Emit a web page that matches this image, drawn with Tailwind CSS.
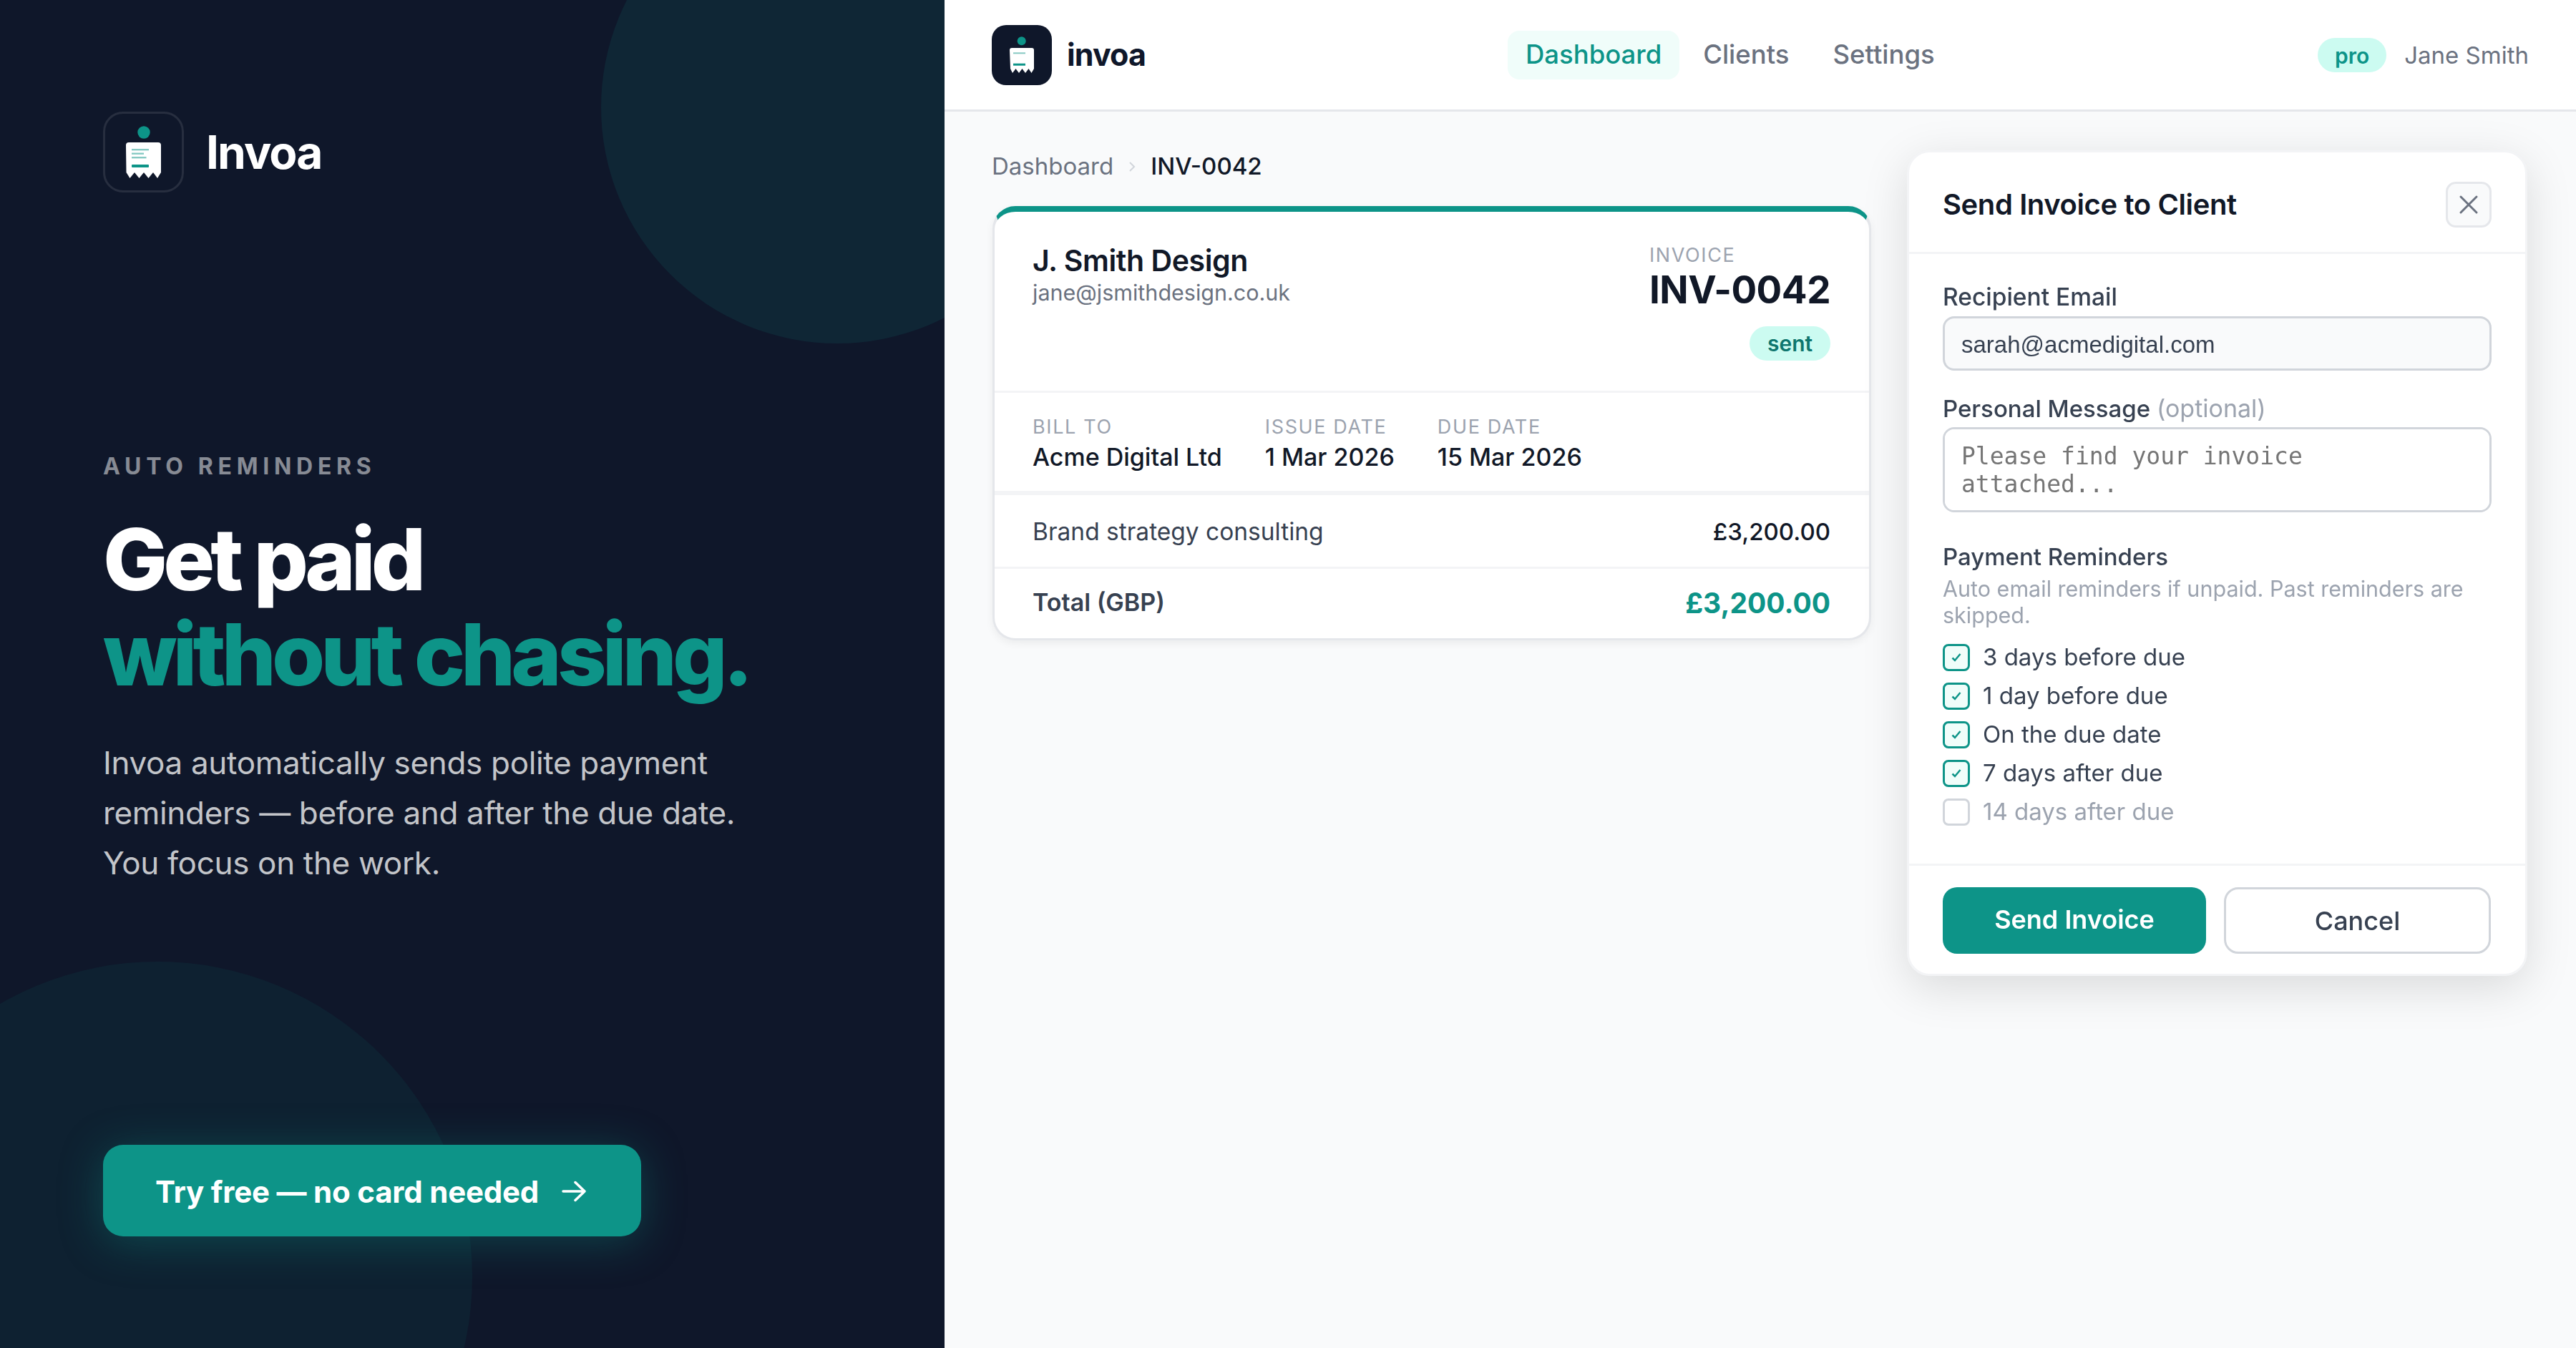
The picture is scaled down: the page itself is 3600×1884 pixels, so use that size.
<!DOCTYPE html>
<html lang="en">
<head>
  <meta charset="UTF-8">
  <title>Invoa</title>
  <script src="https://cdn.jsdelivr.net/npm/@tailwindcss/browser@4"></script>
</head>
<body class="font-['Inter',sans-serif] text-[#111827] bg-[#f9fafb]">
<div class="flex w-[3600px] h-[1884px] overflow-hidden">

  <!-- left panel -->
  <aside class="relative w-[1320px] shrink-0 h-full bg-[#0f172a] overflow-hidden flex flex-col pt-[156px] pb-[156px] pl-[144px]">
    <div class="absolute w-[660px] h-[660px] rounded-full bg-[#0d9488]/12 top-[-180px] right-[-180px]"></div>
    <div class="absolute w-[880px] h-[880px] rounded-full bg-[#0d9488]/8 left-[-220px] bottom-[-340px]"></div>

    <div class="relative flex items-center gap-[31px]">
      <div class="w-[113px] h-[113px] rounded-[28px] border-[3px] border-white/10 box-border relative">
        <svg class="absolute left-[-3px] top-[-3px]" width="113" height="113" viewBox="0 0 113 113">
          <circle cx="57" cy="29" r="8.7" fill="#0d9488"/>
          <path d="M32 47a4 4 0 0 1 4-4h41a4 4 0 0 1 4 4v38l-5 8-6-8-6.500 8-6.500-8-6.500 8-6.500-8-6.500 8-5-8z" fill="#fff"/>
          <rect x="40" y="52" width="24" height="2.400" fill="#0d9488" opacity=".5"/>
          <rect x="40" y="57.500" width="17" height="2.400" fill="#0d9488" opacity=".5"/>
          <rect x="40" y="63" width="20.500" height="2.400" fill="#0d9488" opacity=".5"/>
          <rect x="40" y="74" width="24" height="4" rx="1" fill="#0d9488"/>
        </svg>
      </div>
      <span class="text-[64px] leading-none font-bold tracking-[-0.03em] text-white">Invoa</span>
    </div>

    <div class="relative mt-[366px] text-[32px] leading-[34px] font-bold tracking-[0.21em] text-white/50">AUTO REMINDERS</div>
    <h1 class="relative mt-[46px] text-[120px] leading-[133px] font-extrabold tracking-[-0.05em] text-white">Get paid<br><span class="text-[#0d9488]">without chasing.</span></h1>
    <p class="relative mt-[50px] text-[44px] leading-[70px] tracking-[-0.0075em] text-white/75 w-[960px]">Invoa automatically sends polite payment<br>reminders — before and after the due date.<br>You focus on the work.</p>

    <a class="relative mt-auto self-start w-[752px] h-[128px] pt-[2px] rounded-[28px] bg-[#0d9488] shadow-[0_8px_60px_rgba(13,148,136,0.35)] flex items-center pl-[73px] gap-[32px] text-[42px] font-bold tracking-[-0.005em] text-white">
      Try free — no card needed
      <svg width="34" height="30" viewBox="0 0 34 30" fill="none" stroke="#fff" stroke-width="3.500" stroke-linecap="round" stroke-linejoin="round"><path d="M2 15h30M19 2.500 32 15 19 27.500"/></svg>
    </a>
  </aside>

  <!-- right -->
  <div class="flex-1 min-w-0 flex flex-col">
    <header class="h-[156px] shrink-0 bg-white border-b-[3px] border-[#e5e7eb] flex items-center pl-[66px] pr-[66px]">
      <div class="w-[84px] h-[84px] rounded-[20px] bg-[#0f172a] shrink-0">
        <svg width="84" height="84" viewBox="0 0 84 84">
          <circle cx="41.700" cy="22.300" r="6" fill="#0d9488"/>
          <path d="M25 35a3 3 0 0 1 3-3h28a3 3 0 0 1 3 3v26l-3.500 6-4-6-4.500 6-4.500-6-4.500 6-4.500-6-4.500 6-3-6z" fill="#fff"/>
          <rect x="30" y="38.300" width="17" height="2" fill="#0d9488" opacity=".5"/>
          <rect x="30" y="53.700" width="17" height="3" fill="#0d9488"/>
        </svg>
      </div>
      <span class="ml-[21px] text-[43px] leading-none font-bold tracking-[-0.02em] text-[#0f172a]">invoa</span>

      <nav class="ml-[506px] flex items-center gap-[6px] text-[36.500px] font-medium text-[#6b7280]">
        <a class="h-[68px] w-[240px] flex items-center justify-center rounded-[16px] bg-[#f0fdfa] text-[#0d9488]">Dashboard</a>
        <a class="px-[27px]">Clients</a>
        <a class="px-[28px]">Settings</a>
      </nav>

      <div class="ml-auto flex items-center gap-[25px]">
        <span class="h-[48px] w-[96px] pt-[4px] rounded-full bg-[#ccfbf1] text-[#0d9488] text-[30px] font-semibold flex items-center justify-center">pro</span>
        <span class="pt-[2px] text-[33px] text-[#6b7280]">Jane Smith</span>
      </div>
    </header>

    <main class="flex-1 flex items-start pl-[67px] pr-[68px] pt-[56px] gap-[50px]">
      <div class="w-[1228px] shrink-0">
        <div class="flex items-center h-[50px] text-[33px] -ml-[1px] text-[#6b7280] mt-[-4px]">
          <span>Dashboard</span>
          <svg class="mx-[20px]" width="12" height="16" viewBox="0 0 12 16" fill="none" stroke="#d1d5db" stroke-width="2"><path d="M3 2l6 6-6 6"/></svg>
          <span class="text-[#111827] font-medium">INV-0042</span>
        </div>

        <section class="mt-[30px] bg-white rounded-[32px] border-[3px] border-[#e5e7eb] border-t-[8px] border-t-[#0d9488] shadow-[0_4px_12px_rgba(0,0,0,0.06)] overflow-hidden">
          <div class="h-[253px] border-b-[3px] border-[#f3f4f6] flex justify-between pl-[53px] pr-[54px]">
            <div class="pt-[43px]">
              <div class="text-[41px] leading-[50px] font-semibold tracking-[-0.01em]">J. Smith Design</div>
              <div class="text-[30.500px] leading-[40px] text-[#6b7280]">jane@jsmithdesign.co.uk</div>
            </div>
            <div class="pt-[45px] flex flex-col items-start">
              <div class="text-[27px] leading-[32px] tracking-[0.06em] text-[#9ca3af]">INVOICE</div>
              <div class="mt-[2px] text-[53px] leading-[60px] font-bold tracking-[-0.01em]">INV-0042</div>
              <span class="self-end mt-[21px] h-[48px] w-[113px] rounded-full bg-[#ccfbf1] text-[#0f766e] text-[30px] font-semibold flex items-center justify-center">sent</span>
            </div>
          </div>
          <div class="h-[143px] border-b-[6px] border-[#f3f4f6] flex gap-[60px] pl-[53px] pt-[30px]">
            <div><div class="text-[27px] leading-[36px] tracking-[0.06em] text-[#9ca3af]">BILL TO</div><div class="text-[34px] leading-[48px] font-medium">Acme Digital Ltd</div></div>
            <div><div class="text-[27px] leading-[36px] tracking-[0.06em] text-[#9ca3af]">ISSUE DATE</div><div class="text-[34px] leading-[48px] font-medium">1 Mar 2026</div></div>
            <div><div class="text-[27px] leading-[36px] tracking-[0.06em] text-[#9ca3af]">DUE DATE</div><div class="text-[34px] leading-[48px] font-medium">15 Mar 2026</div></div>
          </div>
          <div class="h-[103px] pt-[3px] border-b-[3px] border-[#f3f4f6] flex items-center justify-between pl-[53px] pr-[54px]">
            <span class="text-[33.500px] text-[#374151]">Brand strategy consulting</span>
            <span class="text-[33px] font-medium">£3,200.00</span>
          </div>
          <div class="h-[97px] flex items-center justify-between pl-[53px] pr-[54px]">
            <span class="text-[34px] font-semibold text-[#374151] -mt-[4px]">Total (GBP)</span>
            <span class="text-[39px] font-bold text-[#0d9488]">£3,200.00</span>
          </div>
        </section>
      </div>

      <!-- send modal -->
      <section class="w-[867px] h-[1154px] -mt-[2px] shrink-0 bg-white rounded-[32px] border-[3px] border-[#f3f4f6] shadow-[0_16px_64px_rgba(0,0,0,0.13)] flex flex-col">
        <div class="h-[142px] pt-[6px] shrink-0 border-b-[3px] border-[#f3f4f6] flex items-center justify-between pl-[47px] pr-[47px]">
          <span class="text-[40px] font-semibold tracking-[-0.01em]">Send Invoice to Client</span>
          <button class="w-[64px] h-[64px] rounded-[14px] border-[3px] border-[#e5e7eb] bg-[#f9fafb] flex items-center justify-center">
            <svg width="28" height="28" viewBox="0 0 28 28" fill="none" stroke="#6b7280" stroke-width="3" stroke-linecap="round"><path d="M3 3l22 22M25 3L3 25"/></svg>
          </button>
        </div>

        <div class="flex-1 pl-[47px] pr-[47px] pt-[38px]">
          <label class="block text-[33.500px] leading-[44px] font-medium text-[#374151]">Recipient Email</label>
          <input value="sarah@acmedigital.com" class="block mt-[5px] w-full h-[76px] pt-[3px] rounded-[16px] border-[3px] border-[#d1d5db] bg-[#f9fafb] px-[23px] text-[33px] text-[#374151] font-['Liberation_Sans',sans-serif] outline-none">
          <label class="block mt-[31px] text-[33px] leading-[44px] font-medium text-[#374151]">Personal Message <span class="text-[34px] font-normal text-[#9ca3af]">(optional)</span></label>
          <textarea rows="2" placeholder="Please find your invoice attached..." class="block mt-[4px] w-full h-[119px] resize-none rounded-[16px] border-[3px] border-[#d1d5db] bg-white px-[23px] py-[18px] text-[33px] leading-[39px] font-['DejaVu_Sans_Mono',monospace] placeholder:text-[#757575] outline-none"></textarea>

          <div class="mt-[40px] text-[33px] leading-[44px] font-medium text-[#374151]">Payment Reminders</div>
          <p class="mt-[4px] text-[30.500px] leading-[37px] text-[#9ca3af]">Auto email reminders if unpaid. Past reminders are skipped.</p>
          <ul class="mt-[14px] flex flex-col text-[33px] text-[#374151]">
            <li class="h-[54px] flex items-center gap-[18px]"><span class="w-[38px] h-[38px] rounded-[8px] border-[3px] border-[#0d9488] bg-[#f0fdfa] flex items-center justify-center"><svg width="16" height="14" viewBox="0 0 16 14" fill="none" stroke="#0d9488" stroke-width="2.500"><path d="M2.500 7.500l3.500 3.500L13.500 2"/></svg></span>3 days before due</li>
            <li class="h-[54px] flex items-center gap-[18px]"><span class="w-[38px] h-[38px] rounded-[8px] border-[3px] border-[#0d9488] bg-[#f0fdfa] flex items-center justify-center"><svg width="16" height="14" viewBox="0 0 16 14" fill="none" stroke="#0d9488" stroke-width="2.500"><path d="M2.500 7.500l3.500 3.500L13.500 2"/></svg></span>1 day before due</li>
            <li class="h-[54px] flex items-center gap-[18px]"><span class="w-[38px] h-[38px] rounded-[8px] border-[3px] border-[#0d9488] bg-[#f0fdfa] flex items-center justify-center"><svg width="16" height="14" viewBox="0 0 16 14" fill="none" stroke="#0d9488" stroke-width="2.500"><path d="M2.500 7.500l3.500 3.500L13.500 2"/></svg></span>On the due date</li>
            <li class="h-[54px] flex items-center gap-[18px]"><span class="w-[38px] h-[38px] rounded-[8px] border-[3px] border-[#0d9488] bg-[#f0fdfa] flex items-center justify-center"><svg width="16" height="14" viewBox="0 0 16 14" fill="none" stroke="#0d9488" stroke-width="2.500"><path d="M2.500 7.500l3.500 3.500L13.500 2"/></svg></span>7 days after due</li>
            <li class="h-[54px] flex items-center gap-[18px] text-[#9ca3af]"><span class="w-[38px] h-[38px] rounded-[8px] border-[3px] border-[#d1d5db] bg-white"></span>14 days after due</li>
          </ul>
        </div>

        <div class="h-[154px] shrink-0 border-t-[3px] border-[#f3f4f6] flex gap-[25px] pl-[47px] pr-[47px] pt-[30px]">
          <button class="w-[368px] h-[93px] rounded-[20px] bg-[#0d9488] text-white text-[36px] font-semibold pb-[4px]">Send Invoice</button>
          <button class="w-[373px] h-[93px] rounded-[20px] border-[3px] border-[#d1d5db] bg-white text-[#374151] text-[36px] font-medium">Cancel</button>
        </div>
      </section>
    </main>
  </div>
</div>
</body>
</html>
